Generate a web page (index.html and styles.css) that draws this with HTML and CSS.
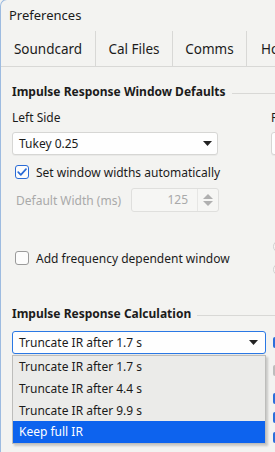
FILE: index.html
```html
<!DOCTYPE html>
<html>
<head>
<meta charset="utf-8">
<link rel="stylesheet" href="styles.css">
</head>
<body>
<div class="window">
  <div class="title">Preferences</div>
  <div class="tabs">
    <div class="tab t1">Soundcard</div>
    <div class="tab t2">Cal Files</div>
    <div class="tab t3">Comms</div>
    <div class="tab t4">Hosts</div>
  </div>
  <div class="page">
    <div class="group-title"><span class="gt-text">Impulse Response Window Defaults</span><i class="rule"></i></div>
    <div class="cols">
      <div class="col-left">
        <div class="label">Left Side</div>
        <div class="combo">
          <span class="combo-text">Tukey 0.25</span>
          <svg class="arrow" width="9" height="5" viewBox="0 0 9 5"><path d="M0 0H9L4.5 5Z" fill="#222"/></svg>
        </div>
        <div class="check first">
          <span class="box checked"><svg width="12" height="12" viewBox="0 0 12 12"><path d="M2.2 6.2L4.8 8.8L10 3.2" fill="none" stroke="#2a6bd6" stroke-width="1.7" stroke-linecap="round" stroke-linejoin="round"/></svg></span>
          <span>Set window widths automatically</span>
        </div>
        <div class="spin-row">
          <span class="muted">Default Width (ms)</span>
          <div class="spin">
            <span class="spin-value">125</span>
            <span class="spin-btns">
              <svg width="10" height="5" viewBox="0 0 10 5"><path d="M0 5H10L5 0Z" fill="#b0b0b0"/></svg>
              <svg width="10" height="5" viewBox="0 0 10 5"><path d="M0 0H10L5 5Z" fill="#b0b0b0"/></svg>
            </span>
          </div>
        </div>
        <div class="check second">
          <span class="box"></span>
          <span>Add frequency dependent window</span>
        </div>
      </div>
      <div class="col-right">
        <div class="label">Right Side</div>
        <div class="combo"></div>
        <span class="radio r1"></span>
        <span class="radio r2"></span>
      </div>
    </div>

    <div class="group-title g2"><span class="gt-text">Impulse Response Calculation</span><i class="rule"></i></div>
    <div class="cols">
      <div class="col-left wide">
        <div class="combo focus">
          <span class="combo-text">Truncate IR after 1.7 s</span>
          <svg class="arrow" width="9" height="5" viewBox="0 0 9 5"><path d="M0 0H9L4.5 5Z" fill="#222"/></svg>
        </div>
        <div class="popup">
          <div class="item">Truncate IR after 1.7 s</div>
          <div class="item">Truncate IR after 4.4 s</div>
          <div class="item short">Truncate IR after 9.9 s</div>
          <div class="item selected">Keep full IR</div>
        </div>
      </div>
      <div class="col-right narrow">
        <span class="sliver blue s1"></span>
        <span class="sliver gray s2"></span>
        <span class="sliver blue s3"></span>
        <span class="sliver blue s4"></span>
        <span class="sliver blue s5"></span>
      </div>
    </div>
  </div>
</div>
</body>
</html>
```
FILE: styles.css
```css
html, body {
  margin: 0;
  padding: 0;
}
body {
  width: 275px;
  height: 452px;
  overflow: hidden;
  background: #f3f3f1;
  font-family: "Noto Sans", "Open Sans", sans-serif;
  font-size: 12px;
  color: #1b1b1b;
}
.window {
  box-sizing: border-box;
  height: 453px;
  margin-top: -1px;
  border-left: 1px solid #9dbbe0;
  border-top: 1px solid #9dbbe0;
  border-top-left-radius: 7px;
  overflow: hidden;
}
.title {
  height: 31px;
  line-height: 31px;
  padding-left: 8px;
  font-size: 13px;
}
.tabs {
  display: flex;
  height: 35px;
  border-bottom: 1px solid #d8d8d6;
  white-space: nowrap;
  overflow: hidden;
}
.tab {
  box-sizing: border-box;
  flex: none;
  display: flex;
  align-items: center;
  justify-content: center;
  font-size: 13.5px;
  border-right: 1px solid #d8d8d6;
}
.t1 { width: 95px; }
.t2 { width: 77px; }
.t3 { width: 74px; }
.t4 { width: 60px; justify-content: flex-start; padding-left: 14px; border-right: none; }

.page {
  padding-left: 11px;
}
.group-title {
  display: flex;
  align-items: center;
  height: 16px;
  margin-top: 16px;
  font-weight: bold;
  white-space: nowrap;
}
.group-title.g2 {
  margin-top: 29px;
}
.rule {
  flex: 1;
  height: 1px;
  margin-left: 6px;
  margin-top: 5px;
  background: #d8d8d6;
}
.cols {
  display: flex;
  gap: 53px;
  white-space: nowrap;
}
.col-left {
  flex: none;
  width: 206px;
  display: flex;
  flex-direction: column;
}
.col-left.wide {
  width: 254px;
}
.col-right {
  flex: none;
  width: 100px;
  display: flex;
  flex-direction: column;
  align-items: flex-start;
}
.cols .narrow {
  margin-left: -46px;
  width: 10px;
}
.label {
  height: 16px;
  line-height: 16px;
  margin-top: 11px;
}
.combo {
  box-sizing: border-box;
  flex: none;
  height: 23px;
  width: 206px;
  margin-top: 6px;
  display: flex;
  align-items: center;
  padding: 0 5px 0 6px;
  background: #fefefe;
  border: 1px solid #d6d6d4;
  border-radius: 3px;
  box-shadow: 0 1px 0 rgba(0,0,0,0.04);
}
.combo-text {
  flex: 1;
}
.combo.focus {
  width: 254px;
  margin-top: 10px;
  border-color: #2a78e4;
  padding-right: 7px;
}
.check {
  display: flex;
  align-items: center;
  height: 14px;
}
.check.first { margin-top: 10px; }
.check.second { margin-top: 39px; }
.box {
  box-sizing: border-box;
  flex: none;
  width: 14px;
  height: 14px;
  margin: 0 7px 0 3px;
  border: 1px solid #9a9a9a;
  border-radius: 3px;
  background: #fcfcfc;
  display: flex;
  align-items: center;
  justify-content: center;
}
.box.checked {
  border-color: #2a6bd6;
}
.spin-row {
  display: flex;
  align-items: center;
  justify-content: space-between;
  margin-top: 9px;
  height: 24px;
}
.muted {
  color: #a9a9a9;
  margin-left: 4px;
}
.spin {
  box-sizing: border-box;
  flex: none;
  width: 88px;
  height: 24px;
  display: flex;
  align-items: stretch;
  border: 1px solid #dfdfdd;
  border-radius: 3px;
  background: #f6f6f4;
  margin-right: -1px;
}
.spin-value {
  flex: 1;
  text-align: right;
  padding-right: 9px;
  line-height: 22px;
  color: #a9a9a9;
  border-right: 1px solid #e6e6e4;
}
.spin-btns {
  width: 20px;
  display: flex;
  flex-direction: column;
  align-items: center;
  justify-content: center;
  gap: 2px;
}
.radio {
  box-sizing: border-box;
  flex: none;
  width: 13px;
  height: 13px;
  margin-left: 2px;
  border: 1px solid #cfcfcf;
  border-radius: 50%;
  background: #f8f8f6;
}
.r1 { margin-top: 85px; }
.r2 { margin-top: 10px; }

.popup {
  box-sizing: border-box;
  margin-top: 1px;
  width: 254px;
  border: 1px solid #bdbdbb;
  background: #ebebe9;
  box-shadow: 2px 2px 2px rgba(0,0,0,0.18);
}
.item {
  height: 22px;
  line-height: 22px;
  padding-left: 6px;
}
.item.short {
  height: 21px;
  line-height: 21px;
}
.item.selected {
  background: #0d63ee;
  color: #ffffff;
}
.sliver {
  flex: none;
  width: 4px;
  height: 11px;
  border-radius: 2px 0 0 2px;
}
.sliver.blue { background: #2c6fdb; }
.sliver.gray { background: #bdbdbd; }
.s1 { margin-top: 16px; }
.s2 { margin-top: 17px; }
.s3 { margin-top: 17px; }
.s4 { margin-top: 8px; }
.s5 { margin-top: 9px; }
```
